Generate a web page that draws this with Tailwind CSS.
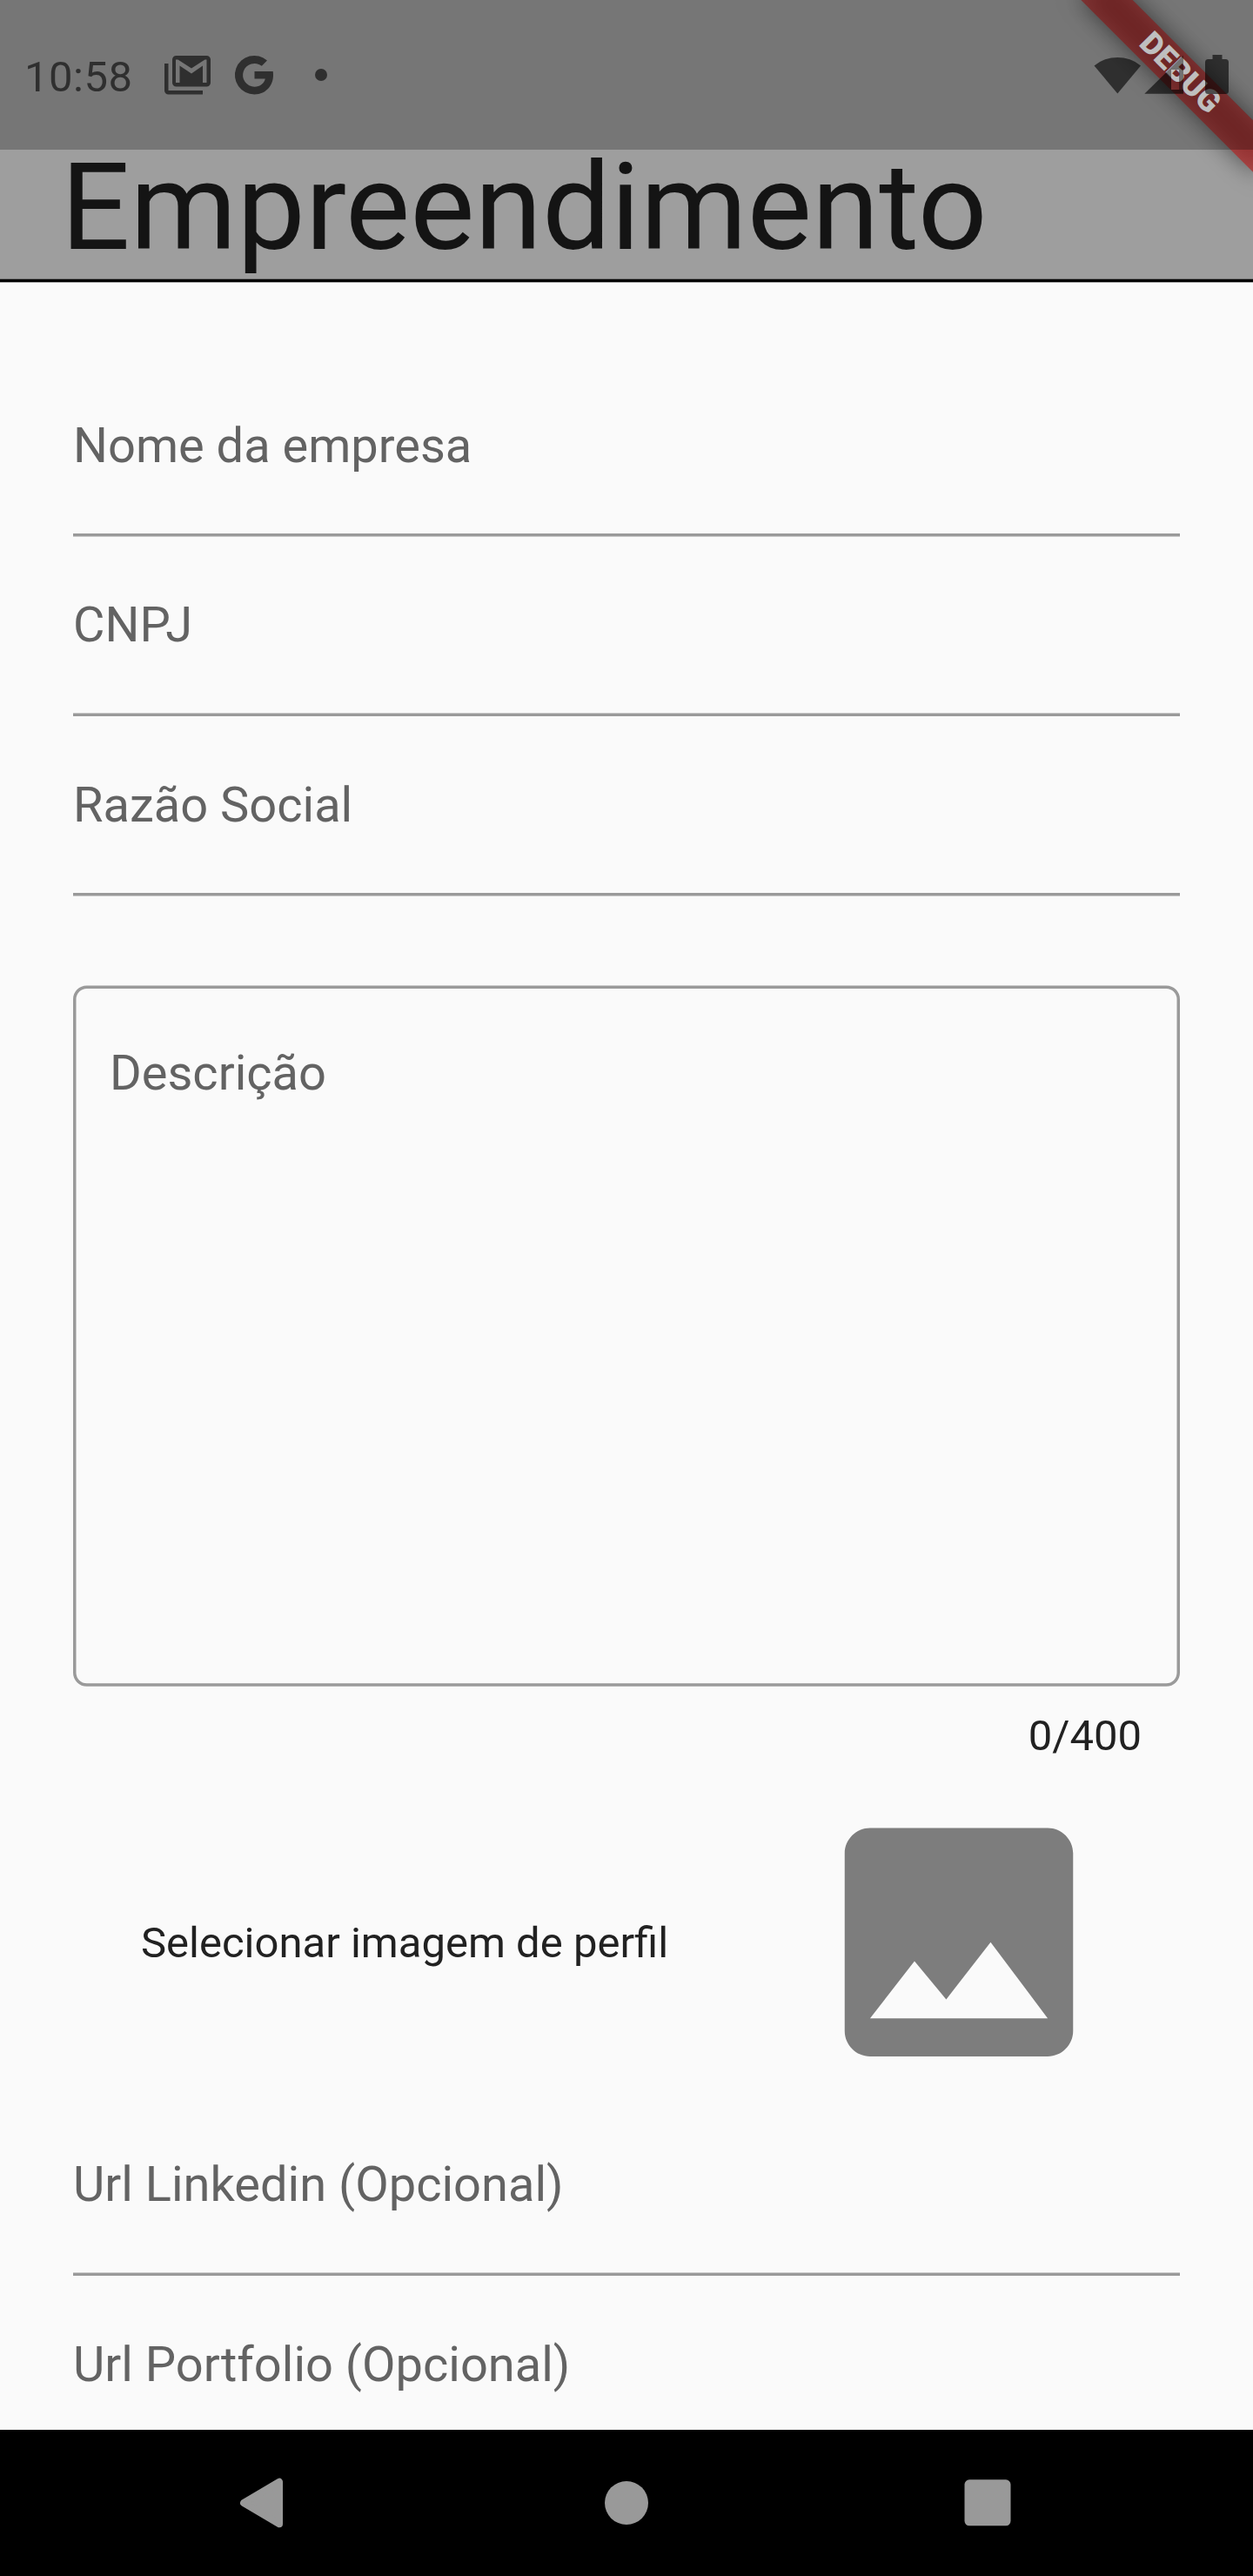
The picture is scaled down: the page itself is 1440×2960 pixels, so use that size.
<!DOCTYPE html>
<html lang="pt-BR">
<head>
<meta charset="utf-8">
<title>Empreendimento</title>
<script src="https://cdn.jsdelivr.net/npm/@tailwindcss/browser@4"></script>
</head>
<body class="bg-black">
<div class="relative flex h-[2960px] w-[1440px] flex-col overflow-hidden bg-[#fafafa] font-['Roboto',sans-serif]">

  <!-- App bar -->
  <header class="h-[325px] shrink-0">
    <div class="h-[321px] border-b border-[#707070] bg-[#9e9e9e] pt-[172px] pl-[70px]">
      <h1 class="pt-px text-[140px] leading-[130px] whitespace-nowrap text-black/87">Empreendimento</h1>
    </div>
    <div class="h-[3px] bg-black"></div>
    <div class="h-px bg-[#a8a8a8]"></div>
  </header>

  <!-- Form -->
  <main class="flex min-h-0 flex-1 flex-col overflow-hidden px-[84px] pt-[82px] text-[56px] leading-[64px] text-[#636363]">
    <div class="h-[209px] shrink-0 border-b-[3px] border-[#9a9a9a] pt-[73px] shadow-[0_1px_#cacaca]">Nome da empresa</div>
    <div class="h-[207px] shrink-0 border-b-[3px] border-[#9a9a9a] pt-[70px] shadow-[inset_0_-1px_#cacaca]">CNPJ</div>
    <div class="h-[206px] shrink-0 border-b-[3px] border-[#9a9a9a] pt-[70px] shadow-[0_1px_#cacaca]">Razão Social</div>

    <div class="relative mt-[103px] h-[806px] shrink-0 pt-[69px] pl-[42px]">
      <svg class="absolute inset-0" width="1272" height="806" fill="none"><rect x="1.75" y="2.25" width="1268.5" height="801.8" rx="14" stroke="#9a9a9a" stroke-width="3.5"/></svg>
      Descrição
    </div>
    <div class="flex h-[118px] shrink-0 justify-end pt-[28px] pr-[44px] text-[49px] leading-[57px] text-[#212121]">0/400</div>

    <div class="flex h-[350px] shrink-0 items-center justify-between pr-[79px] pl-[78px]">
      <span class="mt-[3px] text-[49px] leading-[57px] whitespace-nowrap text-[#212121]">Selecionar imagem de perfil</span>
      <svg class="size-[350px]" viewBox="0 0 24 24" fill="#7d7d7d"><path transform="translate(0 .045)" d="M21 19V5c0-1.1-.9-2-2-2H5c-1.1 0-2 .9-2 2v14c0 1.1.9 2 2 2h14c1.1 0 2-.9 2-2zM8.5 13.5l2.5 3.01L14.5 12l4.5 6H5l3.5-4.500z"/></svg>
    </div>

    <div class="h-[209px] shrink-0 border-b-[3px] border-[#9a9a9a] pt-[72px] shadow-[inset_0_-1px_#cacaca]">Url Linkedin (Opcional)</div>
    <div class="h-[206px] shrink-0 pt-[70px]">Url Portfolio (Opcional)</div>
  </main>

  <!-- Navigation bar -->
  <nav class="flex h-[168px] shrink-0 items-center bg-black">
    <svg width="1440" height="168" fill="#999">
      <path d="M280 84L321 59.700V108.300Z" stroke="#999" stroke-width="8" stroke-linejoin="round"/>
      <circle cx="720" cy="84" r="25"/>
      <rect x="1108.500" y="57.300" width="53" height="53" rx="5.500"/>
    </svg>
  </nav>

  <!-- Debug ribbon -->
  <div class="absolute top-0 right-0 h-[325px] w-[325px] overflow-hidden">
    <div class="absolute top-[63.15px] left-[100.85px] h-[42px] w-[280px] rotate-45">
      <div class="absolute inset-0 bg-black/50 blur-[14px]"></div>
      <div class="absolute inset-0 flex items-center justify-center bg-[#b71c1c]/63 text-[35.7px] leading-none font-black text-white">DEBUG</div>
    </div>
  </div>

  <!-- Status bar -->
  <div class="absolute top-0 left-0 flex h-[172px] w-full items-center bg-black/25 pl-[28px]">
    <span class="mt-[4px] w-[161px] text-[49px] leading-[57px] tracking-[0.5px] text-black/60">10:58</span>
    <svg width="1251" height="172" fill="#000" fill-opacity=".6">
      <path fill-rule="evenodd" d="M13.500 64H48.500A4.500 4.500 0 0 1 53 68.500V95A4.500 4.500 0 0 1 48.500 99.500H13.500A4.500 4.500 0 0 1 9 95V68.500A4.500 4.500 0 0 1 13.500 64ZM13 68.500V95H17.500V75.500L31 84.500 44 75.500V95H48.500V68.500H46.500L31 78.500 15.500 68.500Z"/>
      <path d="M0 73H4.500V104H44V108.500H4.500A4.500 4.500 0 0 1 0 104Z"/>
      <path d="M103.500 82H124.700C127 97 117 108.500 103.500 108.500A22.300 22.300 0 1 1 118 69.500L111.800 75.800A13.400 13.400 0 1 0 103.500 99.700C110 99.700 114.500 96 115.800 90.600H103.500Z"/>
      <circle cx="180" cy="86" r="7"/>
      <path d="M1068.500 75.500A42 42 0 0 1 1122 75.500L1095.300 107.500Z"/>
      <path d="M1126.300 107.800L1151.500 83L1157 88.500V103H1171V107.800Z"/>
      <path d="M1151.500 83L1171 63.500V103H1166V80H1157V88.500Z" fill-opacity=".4"/>
      <path d="M1204.500 63H1215.500V68H1219.500A3.500 3.500 0 0 1 1223 71.500V104.500A3.500 3.500 0 0 1 1219.500 108H1199.500A3.500 3.500 0 0 1 1196 104.500V71.500A3.500 3.500 0 0 1 1199.500 68H1204.500Z"/>
    </svg>
  </div>
</div>
</body>
</html>
